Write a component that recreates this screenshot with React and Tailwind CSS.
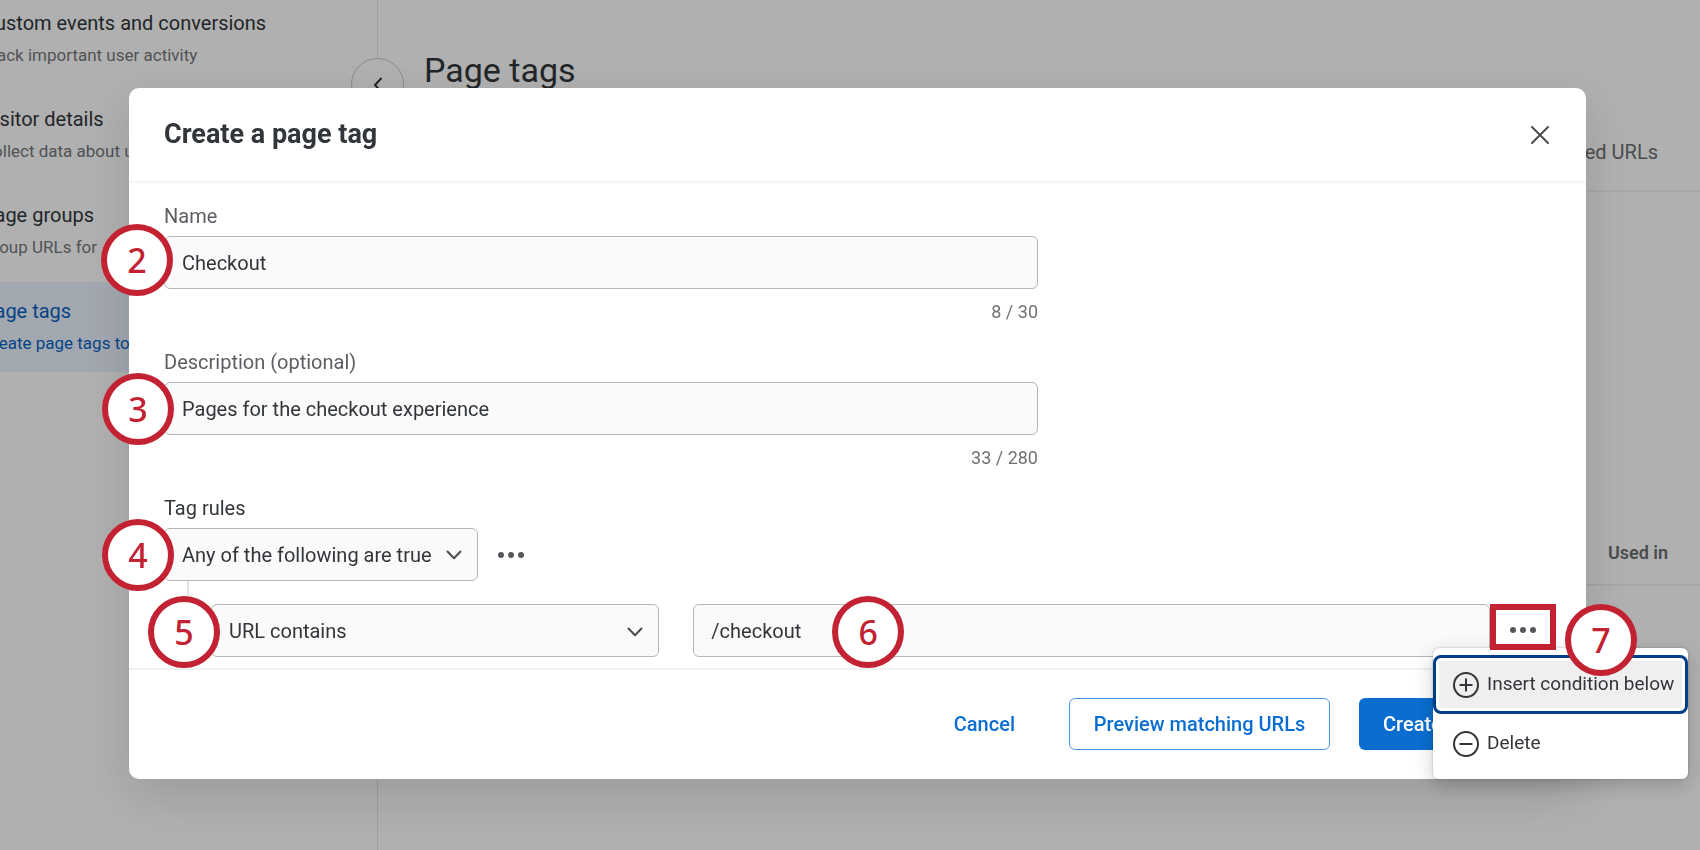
import { useState } from "react";
import clsx from "clsx";

const NAV_ITEMS = [
    {
        title: "Custom events and conversions",
        text: "Track important user activity",
    },
    { title: "Visitor details", text: "Collect data about users" },
    { title: "Page groups", text: "Group URLs for" },
    { title: "Page tags", text: "Create page tags to", active: true },
];

const CONTROL =
    "h-[53px] w-full rounded-md border border-[#b5b6b8] bg-[#fafafa] px-[17px] text-xl text-[#32363a] outline-none";

const Dots = () => (
    <svg width="26" height="6" viewBox="0 0 26 6" fill="#55585c">
        <circle cx="3" cy="3" r="3" />
        <circle cx="13" cy="3" r="3" />
        <circle cx="23" cy="3" r="3" />
    </svg>
);

const Chevron = ({ className }) => (
    <svg
        className={clsx("pointer-events-none absolute", className)}
        width="16"
        height="10"
        viewBox="0 0 16 10"
        fill="none"
        stroke="#4a4d51"
        strokeWidth="2"
        strokeLinecap="round"
        strokeLinejoin="round"
    >
        <path d="M1.5 1.5 8 8.3l6.5-6.8" />
    </svg>
);

const Step = ({ n, className }) => (
    <span
        className={clsx(
            "absolute z-20 flex size-[72px] items-center justify-center rounded-full border-6 border-[#c32232] bg-white font-['Noto_Sans',sans-serif] text-[34px] leading-none font-medium text-[#c32232]",
            className
        )}
    >
        {n}
    </span>
);

const TextField = ({ id, label, value, onChange, max, step }) => (
    <div className="w-full max-w-[874px]">
        <label htmlFor={id} className="block text-xl leading-6 text-[#5b5e62]">
            {label}
        </label>
        <div className="relative mt-2">
            {step}
            <input
                id={id}
                className={CONTROL}
                value={value}
                onChange={(e) => onChange(e.target.value)}
            />
        </div>
        <p className="mt-[13px] text-right text-lg leading-5 text-[#6f7174]">
            {value.length} / {max}
        </p>
    </div>
);

const Sidebar = () => (
    <nav className="w-[378px] shrink-0 border-r border-[#e5e5e5]">
        <div className="-mt-1.5 flex flex-col gap-1.5">
            {NAV_ITEMS.map((item) => (
                <a
                    key={item.title}
                    href="#"
                    className={clsx(
                        "-ml-[18px] flex h-[90px] flex-col justify-center gap-2 whitespace-nowrap",
                        item.active
                            ? "bg-[#e9f1fd] text-[#0a62c0]"
                            : "text-[#32363a]"
                    )}
                >
                    <span className="text-xl leading-6">{item.title}</span>
                    <span
                        className={clsx(
                            "text-[17px] leading-6",
                            !item.active && "text-[#74777a]"
                        )}
                    >
                        {item.text}
                    </span>
                </a>
            ))}
        </div>
    </nav>
);

const Background = () => (
    <div className="flex h-screen overflow-hidden bg-[#fdfdfd]">
        <Sidebar />
        <button
            className="mt-[58px] -ml-[27px] flex size-[53px] shrink-0 items-center justify-center rounded-full border border-[#c4c4c4] bg-[#fdfdfd]"
            aria-label="Collapse"
        >
            <svg
                width="10"
                height="16"
                viewBox="0 0 10 16"
                fill="none"
                stroke="#32363a"
                strokeWidth="2"
            >
                <path d="M8.5 1 2 8l6.5 7" />
            </svg>
        </button>
        <main className="flex-1">
            <h1 className="mt-[46px] ml-5 text-[34px] leading-[48px] text-[#32363a]">
                Page tags
            </h1>
            <div className="mt-[44px] flex h-[54px] justify-end border-b-2 border-[#f0f0f0] pr-[42px] text-xl leading-7 text-[#6a6d70]">
                Tagged URLs
            </div>
            <div className="mt-[345px] flex h-[49px] justify-end border-b-2 border-[#ececec] pr-[32px] text-lg leading-8 font-semibold text-[#6a6d70]">
                Used in
            </div>
        </main>
    </div>
);

const RowMenu = () => (
    <div
        role="menu"
        className="absolute top-[44px] -left-[57px] z-10 flex w-[255px] flex-col rounded-md bg-white pt-[7px] pb-1.5 shadow-[0_6px_20px_rgba(0,0,0,0.2),0_0_2px_rgba(0,0,0,0.3)]"
    >
        <button
            role="menuitem"
            className="flex h-[59px] items-center gap-2 rounded-lg border-3 border-[#003e87] bg-[#efefef] pl-[17px] text-[19px] whitespace-nowrap text-[#32363a] inset-ring-3 inset-ring-white"
        >
            <svg
                width="26"
                height="26"
                viewBox="0 0 26 26"
                fill="none"
                stroke="#32363a"
                strokeWidth="2"
            >
                <circle cx="13" cy="13" r="12" />
                <path d="M13 6.5v13M6.5 13h13" />
            </svg>
            Insert condition below
        </button>
        <button
            role="menuitem"
            className="flex h-[59px] items-center gap-2 pl-5 text-[19px] text-[#32363a]"
        >
            <svg
                width="26"
                height="26"
                viewBox="0 0 26 26"
                fill="none"
                stroke="#32363a"
                strokeWidth="2"
            >
                <circle cx="13" cy="13" r="12" />
                <path d="M6.5 13h13" />
            </svg>
            Delete
        </button>
    </div>
);

const CreateTagDialog = () => {
    const [name, setName] = useState("Checkout");
    const [description, setDescription] = useState(
        "Pages for the checkout experience"
    );
    const [url, setUrl] = useState("/checkout");

    return (
        <div
            role="dialog"
            aria-label="Create a page tag"
            className="w-full rounded-[10px] bg-white shadow-[0_16px_50px_rgba(0,0,0,0.14)]"
        >
            <header className="flex h-[95px] items-center justify-between border-b-2 border-[#f5f5f5] pr-[37px] pl-[35px]">
                <h2 className="text-[27px] font-bold text-[#32363a]">
                    Create a page tag
                </h2>
                <button aria-label="Close">
                    <svg
                        width="18"
                        height="18"
                        viewBox="0 0 18 18"
                        fill="none"
                        stroke="#4a4d51"
                        strokeWidth="2"
                        strokeLinecap="round"
                    >
                        <path d="m1 1 16 16M17 1 1 17" />
                    </svg>
                </button>
            </header>

            <div className="pt-[21px] pr-[30px] pb-[11px] pl-[35px]">
                <div className="flex flex-col gap-7">
                    <TextField
                        id="name"
                        label="Name"
                        value={name}
                        onChange={setName}
                        max={30}
                        step={<Step n={2} className="-top-3 -left-[63px]" />}
                    />
                    <TextField
                        id="description"
                        label="Description (optional)"
                        value={description}
                        onChange={setDescription}
                        max={280}
                        step={<Step n={3} className="-top-[9px] -left-[62px]" />}
                    />
                </div>

                <label
                    htmlFor="match"
                    className="mt-7 block text-xl leading-6 text-[#32363a]"
                >
                    Tag rules
                </label>
                <div className="mt-2 flex items-center gap-5">
                    <div className="relative w-[314px]">
                        <Step n={4} className="-top-[9px] -left-[62px]" />
                        <select
                            id="match"
                            className={clsx(CONTROL, "appearance-none")}
                        >
                            <option>Any of the following are true</option>
                        </select>
                        <Chevron className="top-[22px] right-4" />
                    </div>
                    <button aria-label="Rule set options">
                        <Dots />
                    </button>
                </div>
                <div className="ml-[23px] h-[23px] border-l-2 border-[#e5e5e5]" />
                <div className="flex items-start pl-[47px]">
                    <div className="relative w-1/3">
                        <Step n={5} className="-top-2 -left-[63px]" />
                        <select
                            aria-label="Condition"
                            className={clsx(CONTROL, "appearance-none")}
                        >
                            <option>URL contains</option>
                        </select>
                        <Chevron className="top-[23px] right-4" />
                    </div>
                    <div className="relative ml-[34px] flex-1">
                        <input
                            aria-label="URL value"
                            className={CONTROL}
                            value={url}
                            onChange={(e) => setUrl(e.target.value)}
                        />
                        <Step n={6} className="-top-2 left-[139px]" />
                    </div>
                    <div className="relative">
                        <button
                            aria-label="Condition options"
                            className="relative z-20 flex h-[46px] w-[66px] items-center justify-center border-6 border-[#c32232] bg-white pt-1.5"
                        >
                            <Dots />
                        </button>
                        <RowMenu />
                        <Step n={7} className="top-0 left-[75px]" />
                    </div>
                </div>
            </div>

            <footer className="flex justify-end border-t-2 border-[#f0f0f0] pt-7 pr-[35px] pb-[29px] text-xl font-medium">
                <button className="mr-[30px] px-6 text-[#0a6ed1]">
                    Cancel
                </button>
                <button className="h-[52px] w-[261px] rounded-md border border-[#4a94e0] text-[#0a6ed1]">
                    Preview matching URLs
                </button>
                <button className="ml-[29px] h-[52px] w-[192px] rounded-md bg-[#0a6ed1] pl-6 text-left text-white">
                    Create
                </button>
            </footer>
        </div>
    );
};

export default function App() {
    return (
        <div className="font-[Roboto,sans-serif]">
            <Background />
            <div className="fixed inset-0 flex items-start bg-black/30 pt-[88px] pr-[114px] pl-[129px]">
                <CreateTagDialog />
            </div>
        </div>
    );
}
